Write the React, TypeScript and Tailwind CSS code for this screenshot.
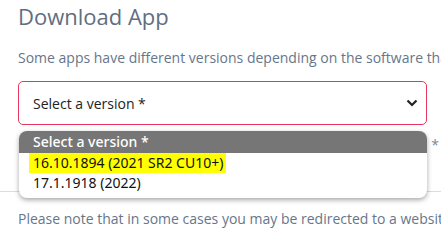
import React from "react";

export default function App() {
  return (
    <div className="relative w-[441px] h-[233px] overflow-hidden bg-white font-['Open_Sans',sans-serif]">
      <div className="pl-[18px] pt-[1px]">
        <h2 className="text-[22px] leading-[30px] font-normal text-[#5f6e80] whitespace-nowrap">Download App</h2>
        <p className="mt-[17px] text-[14px] leading-[20px] text-[#66768a] whitespace-nowrap">
          Some apps have different versions depending on the software that you use
        </p>
        <div className="mt-[13px] w-[409px] h-[44px] border border-[#e8365d] rounded-[5px] flex items-center justify-between pl-[14px] pr-[8px]">
          <span className="text-[14px] text-[#222]">Select a version *</span>
          <svg width="12" height="8" viewBox="0 0 12 8" className="text-[#222]">
            <path d="M1.5 1.5 L6 6 L10.5 1.5" fill="none" stroke="currentColor" strokeWidth="2.2" />
          </svg>
        </div>
        <div className="mt-[6px] h-[28px] flex justify-end pr-[2px]">
          <span className="text-[14px] leading-[28px] text-[#7a8899]">*</span>
        </div>
      </div>
      <div className="mt-[32px] border-t border-[#d7dde4]" />
      <p className="pl-[18px] mt-[17px] text-[14px] leading-[20px] text-[#66768a] whitespace-nowrap">
        Please note that in some cases you may be redirected to a website
      </p>
      <div className="absolute left-[19px] top-[131px] w-[408px] h-[67px] rounded-[8px] bg-white overflow-hidden shadow-[0_2px_5px_rgba(0,0,0,0.35)] font-['Noto_Sans',sans-serif]">
        <div className="h-[22px] bg-[#767676] text-white text-[14px] leading-[22px] pl-[14px] font-medium">Select a version *</div>
        <div className="h-[20px] flex items-center pl-[10px]">
          <span className="bg-[#ffff00] text-[#111] text-[14px] leading-[20px] pl-[4px] pr-[3px]">16.10.1894 (2021 SR2 CU10+)</span>
        </div>
        <div className="h-[20px] flex items-center pl-[14px]">
          <span className="text-[#111] text-[14px] leading-[20px]">17.1.1918 (2022)</span>
        </div>
      </div>
    </div>
  );
}
